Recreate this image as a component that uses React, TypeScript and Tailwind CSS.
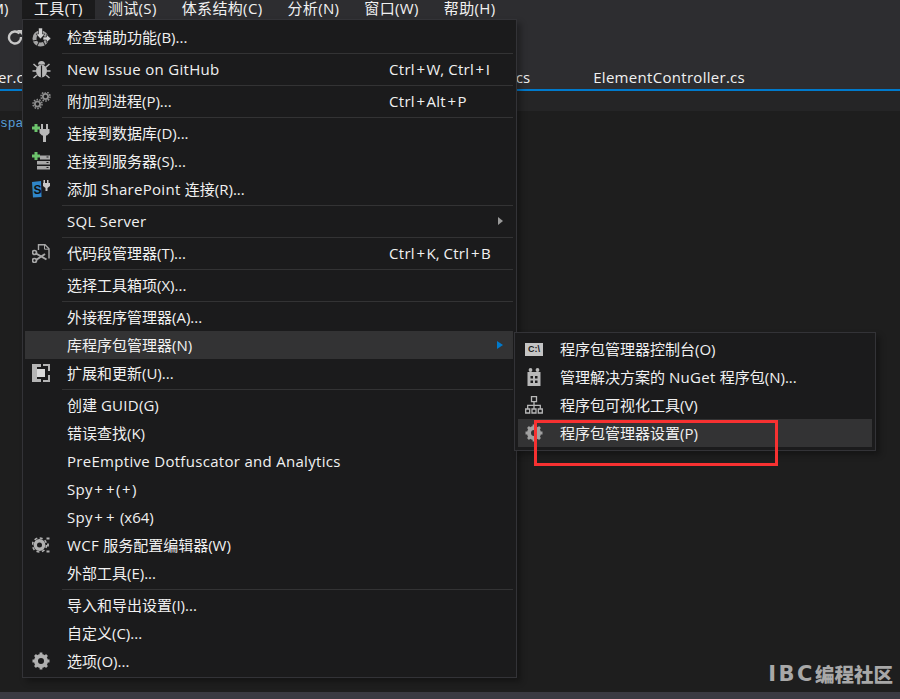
import type { ReactNode } from "react"

type Item = { label: string; shortcut?: string; icon?: ReactNode; arrow?: boolean; active?: boolean; sep?: boolean }

// Latin runs and plus signs sit wider in the original UI font than in Open Sans
function Label({ text }: { text: string }) {
  const parts = text.split(/(\++|[A-Za-z][A-Za-z ]+)/)
  return (
    <span className="whitespace-pre">
      {parts.map((part, i) =>
        part.startsWith("+") ? (
          <span key={i} className="-mr-[1.5px] ml-[1.5px] tracking-[3px]">{part}</span>
        ) : /^[A-Za-z]{2}|^[A-Za-z] /.test(part) ? (
          <span key={i} className="tracking-[0.3px]">{part}</span>
        ) : (
          <span key={i}>{part}</span>
        )
      )}
    </span>
  )
}

const Bug = () => (
  <svg width="19" height="19" viewBox="0 0 19 19" fill="#b8b8b8">
    <ellipse cx="9.500" cy="11" rx="5.500" ry="6.500" />
    <path d="M6 4.500a3.500 3.500 0 0 1 7 0z" />
    <path d="M1.500 4l4 3.500M17.500 4l-4 3.500M0.500 11h4M18.500 11h-4M1.500 18l3.500-3M17.500 18L14 15" stroke="#b8b8b8" strokeWidth="1.500" />
    <path d="M9.500 5.500V17.500" stroke="#1b1b1c" strokeWidth="1.200" />
  </svg>
)

const Gear = ({ size = 18, fill = "#b0b0b0" }: { size?: number; fill?: string }) => (
  <svg width={size} height={size} viewBox="0 0 18 18">
    <circle cx="9" cy="9" r="5" fill="none" stroke={fill} strokeWidth="4" />
    <path d="M9 0.500v3M9 14.500v3M0.500 9h3M14.500 9h3M3 3l2.200 2.200M12.800 12.800L15 15M15 3l-2.200 2.200M5.200 12.800L3 15" stroke={fill} strokeWidth="2.800" />
  </svg>
)

const Accessibility = () => (
  <svg width="19" height="19" viewBox="0 0 19 19" fill="none">
    <circle cx="8.500" cy="10.500" r="6" stroke="#a4a4a4" strokeWidth="4" />
    <path d="M1 13l5-1M5 18l2-4M13 17l-2-4" stroke="#1b1b1c" strokeWidth="1" />
    <path d="M6.500 0h4v6h2.500l-4.500 5-4.500-5h2.500z" fill="#d2d2d2" stroke="#1b1b1c" strokeWidth="0.600" />
    <path d="M11 9h3.500V6.500l4.500 4-4.500 4V12H11z" fill="#d2d2d2" stroke="#1b1b1c" strokeWidth="0.600" />
  </svg>
)

const AttachGears = () => (
  <svg width="19" height="18" viewBox="0 0 19 18" fill="none" stroke="#8e8e8e">
    <circle cx="5.500" cy="12" r="2.600" strokeWidth="1.800" />
    <circle cx="5.500" cy="12" r="4.500" strokeWidth="1.500" strokeDasharray="1.600 1.200" />
    <circle cx="13.500" cy="4.500" r="2.600" strokeWidth="1.800" />
    <circle cx="13.500" cy="4.500" r="4.500" strokeWidth="1.500" strokeDasharray="1.600 1.200" />
  </svg>
)

const PlugPlus = () => (
  <svg width="18" height="18" viewBox="0 0 18 18">
    <path d="M0 2.500h2.500V0h3v2.500H8v3H5.500V8h-3V5.500H0z" fill="#6cc36c" />
    <path d="M9 0h2v5h3V0h2v5h1.500v4L15 11.500h-1V18h-3v-6.500h-1L7.500 9V5H9z" fill="#b8b8b8" />
  </svg>
)

const ServerPlus = () => (
  <svg width="18" height="18" viewBox="0 0 18 18">
    <path d="M0 2.500h2.500V0h3v2.500H8v3H5.500V8h-3V5.500H0z" fill="#6cc36c" />
    <path d="M8 3.500h10v4H8zM5 9h13v3.500H5zM5 14h13v3.500H5z" fill="#a8a8a8" />
    <path d="M14.500 5h2M14.500 10.500h2M14.500 15.500h2" stroke="#1b1b1c" strokeWidth="1" />
  </svg>
)

const SharePoint = () => (
  <svg width="18" height="18" viewBox="0 0 18 18">
    <path d="M0 2l9-1 0.500 16L1 17.500z" fill="#2f86c9" />
    <text x="1.500" y="14" fontSize="12" fontWeight="700" fill="#101010" fontFamily="'Liberation Sans',sans-serif">S</text>
    <path d="M11.500 0h1.500v3h2V0h1.500v3h1.500v3l-2.500 2v3h-2V8L11 6V3h.5z" fill="#c8c8c8" />
  </svg>
)

const Snippet = () => (
  <svg width="18" height="19" viewBox="0 0 18 19" fill="none" stroke="#a8a8a8" strokeWidth="1.400">
    <path d="M6.500 6V.700h6.500l4 4V14.500" />
    <path d="M12.500 .7v4.500H17" strokeWidth="1" />
    <path d="M4 9.500l10.500 6M4 16l9-6" strokeWidth="2" />
    <circle cx="2.500" cy="8.500" r="2" strokeWidth="1.700" />
    <circle cx="2.500" cy="16.500" r="2" strokeWidth="1.700" />
  </svg>
)

const Extensions = () => (
  <svg width="18" height="18" viewBox="0 0 18 18">
    <path d="M0 0h9v3H5v12h4v3H0zM11 0h7v7h-2V2h-5zM11 16h5v-5h2v7h-7z" fill="#b4b4b4" />
    <rect x="5" y="5" width="8" height="8" fill="#dadada" />
  </svg>
)

const WcfGear = () => (
  <svg width="18" height="16" viewBox="0 0 18 16" fill="none">
    <circle cx="7.500" cy="8" r="4.200" stroke="#b0b0b0" strokeWidth="3.400" />
    <circle cx="7.500" cy="8" r="7" stroke="#b0b0b0" strokeWidth="1.600" strokeDasharray="3 2.500" />
    <path d="M14.500 1.500h3M14.500 14.500h3M16 6.500v3" stroke="#b0b0b0" strokeWidth="1.800" />
  </svg>
)

const Console = () => (
  <div className="flex h-[13px] w-[18px] items-center justify-center bg-[#c4c4c4] text-[9px] leading-none font-bold text-[#1b1b1c] [font-family:'Liberation_Sans',sans-serif]">
    C:\
  </div>
)

const NuGet = () => (
  <svg width="14" height="18" viewBox="0 0 14 18" fill="#b8b8b8">
    <circle cx="3.500" cy="2" r="1.900" />
    <circle cx="10.500" cy="2" r="1.900" />
    <path d="M0.500 4h13v14H0.500z" />
    <path d="M3.500 8h2.500v2.500H3.500zM8 8h2.500v2.500H8zM3.500 12.500h2.500V15H3.500zM8 12.500h2.500V15H8z" fill="#1b1b1c" />
  </svg>
)

const Hierarchy = () => (
  <svg width="18" height="18" viewBox="0 0 18 18" fill="none" stroke="#b8b8b8" strokeWidth="1.300">
    <path d="M6.500 .7h5v5h-5zM.7 13h4v4h-4zM7 13h4v4H7zM13.300 13h4v4h-4zM9 5.700V13M2.700 13V9.300h12.600V13" />
  </svg>
)

const items: Item[] = [
  { label: "检查辅助功能(B)...", icon: <Accessibility />, sep: true },
  { label: "New Issue on GitHub", shortcut: "Ctrl+W, Ctrl+I", icon: <Bug />, sep: true },
  { label: "附加到进程(P)...", shortcut: "Ctrl+Alt+P", icon: <AttachGears />, sep: true },
  { label: "连接到数据库(D)...", icon: <PlugPlus /> },
  { label: "连接到服务器(S)...", icon: <ServerPlus /> },
  { label: "添加 SharePoint 连接(R)...", icon: <SharePoint />, sep: true },
  { label: "SQL Server", arrow: true, sep: true },
  { label: "代码段管理器(T)...", shortcut: "Ctrl+K, Ctrl+B", icon: <Snippet />, sep: true },
  { label: "选择工具箱项(X)...", sep: true },
  { label: "外接程序管理器(A)..." },
  { label: "库程序包管理器(N)", arrow: true, active: true },
  { label: "扩展和更新(U)...", icon: <Extensions />, sep: true },
  { label: "创建 GUID(G)" },
  { label: "错误查找(K)" },
  { label: "PreEmptive Dotfuscator and Analytics" },
  { label: "Spy++(+)" },
  { label: "Spy++ (x64)" },
  { label: "WCF 服务配置编辑器(W)", icon: <WcfGear /> },
  { label: "外部工具(E)...", sep: true },
  { label: "导入和导出设置(I)..." },
  { label: "自定义(C)..." },
  { label: "选项(O)...", icon: <Gear /> },
]

const subItems: Item[] = [
  { label: "程序包管理器控制台(O)", icon: <Console /> },
  { label: "管理解决方案的 NuGet 程序包(N)...", icon: <NuGet /> },
  { label: "程序包可视化工具(V)", icon: <Hierarchy /> },
  { label: "程序包管理器设置(P)", icon: <Gear fill="#a0a0a0" />, active: true },
]

const menuBar = ["工具(T)", "测试(S)", "体系结构(C)", "分析(N)", "窗口(W)", "帮助(H)"]

function MenuRow({ item }: { item: Item }) {
  return (
    <>
      <div className={`flex h-7 items-center ${item.active ? "bg-[#333334]" : ""}`}>
        <div className="mr-[10px] flex w-[32px] shrink-0 items-center justify-center">{item.icon}</div>
        <Label text={item.label} />
        {item.shortcut && (
          <span className="ml-auto w-[124px]">
            <Label text={item.shortcut} />
          </span>
        )}
        {item.arrow && (
          <span
            className={`mr-[10px] ml-auto h-0 w-0 border-y-4 border-y-transparent ${
              item.active ? "border-l-[6px] border-l-[#007acc]" : "border-l-[5px] border-l-[#999999]"
            }`}
          />
        )}
      </div>
      {item.sep && <div className="my-[1.5px] ml-[37px] h-px bg-[#333334]" />}
    </>
  )
}

export default function App() {
  return (
    <div className="relative flex h-[699px] w-[900px] flex-col overflow-hidden bg-[#1e1e1e] text-[15px] text-[#f1f1f1] [font-family:'Open_Sans','Noto_Sans_CJK_SC',sans-serif]">
      <div className="flex h-[20px] shrink-0 bg-[#2d2d30]">
        <div className="flex w-[21.5px] justify-end overflow-hidden pr-[13px] pb-1 leading-[16px]">
          <span className="whitespace-nowrap">M)</span>
        </div>
        {menuBar.map((m, i) => (
          <div
            key={m}
            className={`h-[20px] px-[12.5px] leading-[16px] tracking-[0.35px] whitespace-nowrap ${i === 0 ? "bg-[#1b1b1c]" : ""}`}
          >
            {m}
          </div>
        ))}
      </div>
      <div className="h-[50px] shrink-0 bg-[#2d2d30] pt-[9px] pl-[7px] text-[#c8c8c8]">
        <svg width="16" height="16" viewBox="0 0 16 16" fill="none" stroke="currentColor" strokeWidth="2.400">
          <path d="M12.500 4.500A6 6 0 1 0 14 8" />
          <path d="M10 1h5v5z" fill="currentColor" stroke="none" />
        </svg>
      </div>
      <div className="flex h-[21px] shrink-0 items-end border-b-2 border-[#007acc] bg-[#2d2d30] pb-[3px] leading-[18px] whitespace-nowrap">
        <span className="-ml-[2px]">er.cs</span>
        <span className="ml-[485px]">cs</span>
        <span className="ml-[63px]">
          <Label text="ElementController.cs" />
        </span>
      </div>
      <div className="h-[20px] shrink-0 bg-[#252526]" />
      <div className="flex-1 pt-[6px] text-[13px] leading-none text-[#569cd6] [font-family:'Liberation_Mono',monospace]">
        spa
      </div>
      <div className="h-[7px] shrink-0 bg-[#3a3a42]" />

      <div className="absolute top-[19px] left-[22px] h-[659px] w-[495px] border border-[#333337] bg-[#1b1b1c] pt-[3px] pr-[3px] pl-[2px] shadow-[4px_4px_6px_rgba(0,0,0,0.3)]">
        {items.map((item) => (
          <MenuRow key={item.label} item={item} />
        ))}
      </div>

      <div className="absolute top-[332px] left-[514px] h-[119px] w-[362px] border border-[#333337] bg-[#1b1b1c] px-[3px] pt-[2px] shadow-[4px_4px_6px_rgba(0,0,0,0.3)]">
        {subItems.map((item) => (
          <MenuRow key={item.label} item={item} />
        ))}
      </div>

      <div className="absolute top-[420px] left-[534px] h-[46px] w-[244px] border-[3px] border-[#f73131]" />

      <div className="absolute top-[660px] right-[7px] flex items-center text-[19.500px] leading-[28px] font-black whitespace-nowrap text-[#a8a8a8] [font-family:'Noto_Sans_CJK_SC',sans-serif]">
        <span className="text-[21px] font-bold tracking-[2.5px] [font-family:'DejaVu_Sans',sans-serif]">IBC</span>
        编程社区
      </div>
    </div>
  )
}
